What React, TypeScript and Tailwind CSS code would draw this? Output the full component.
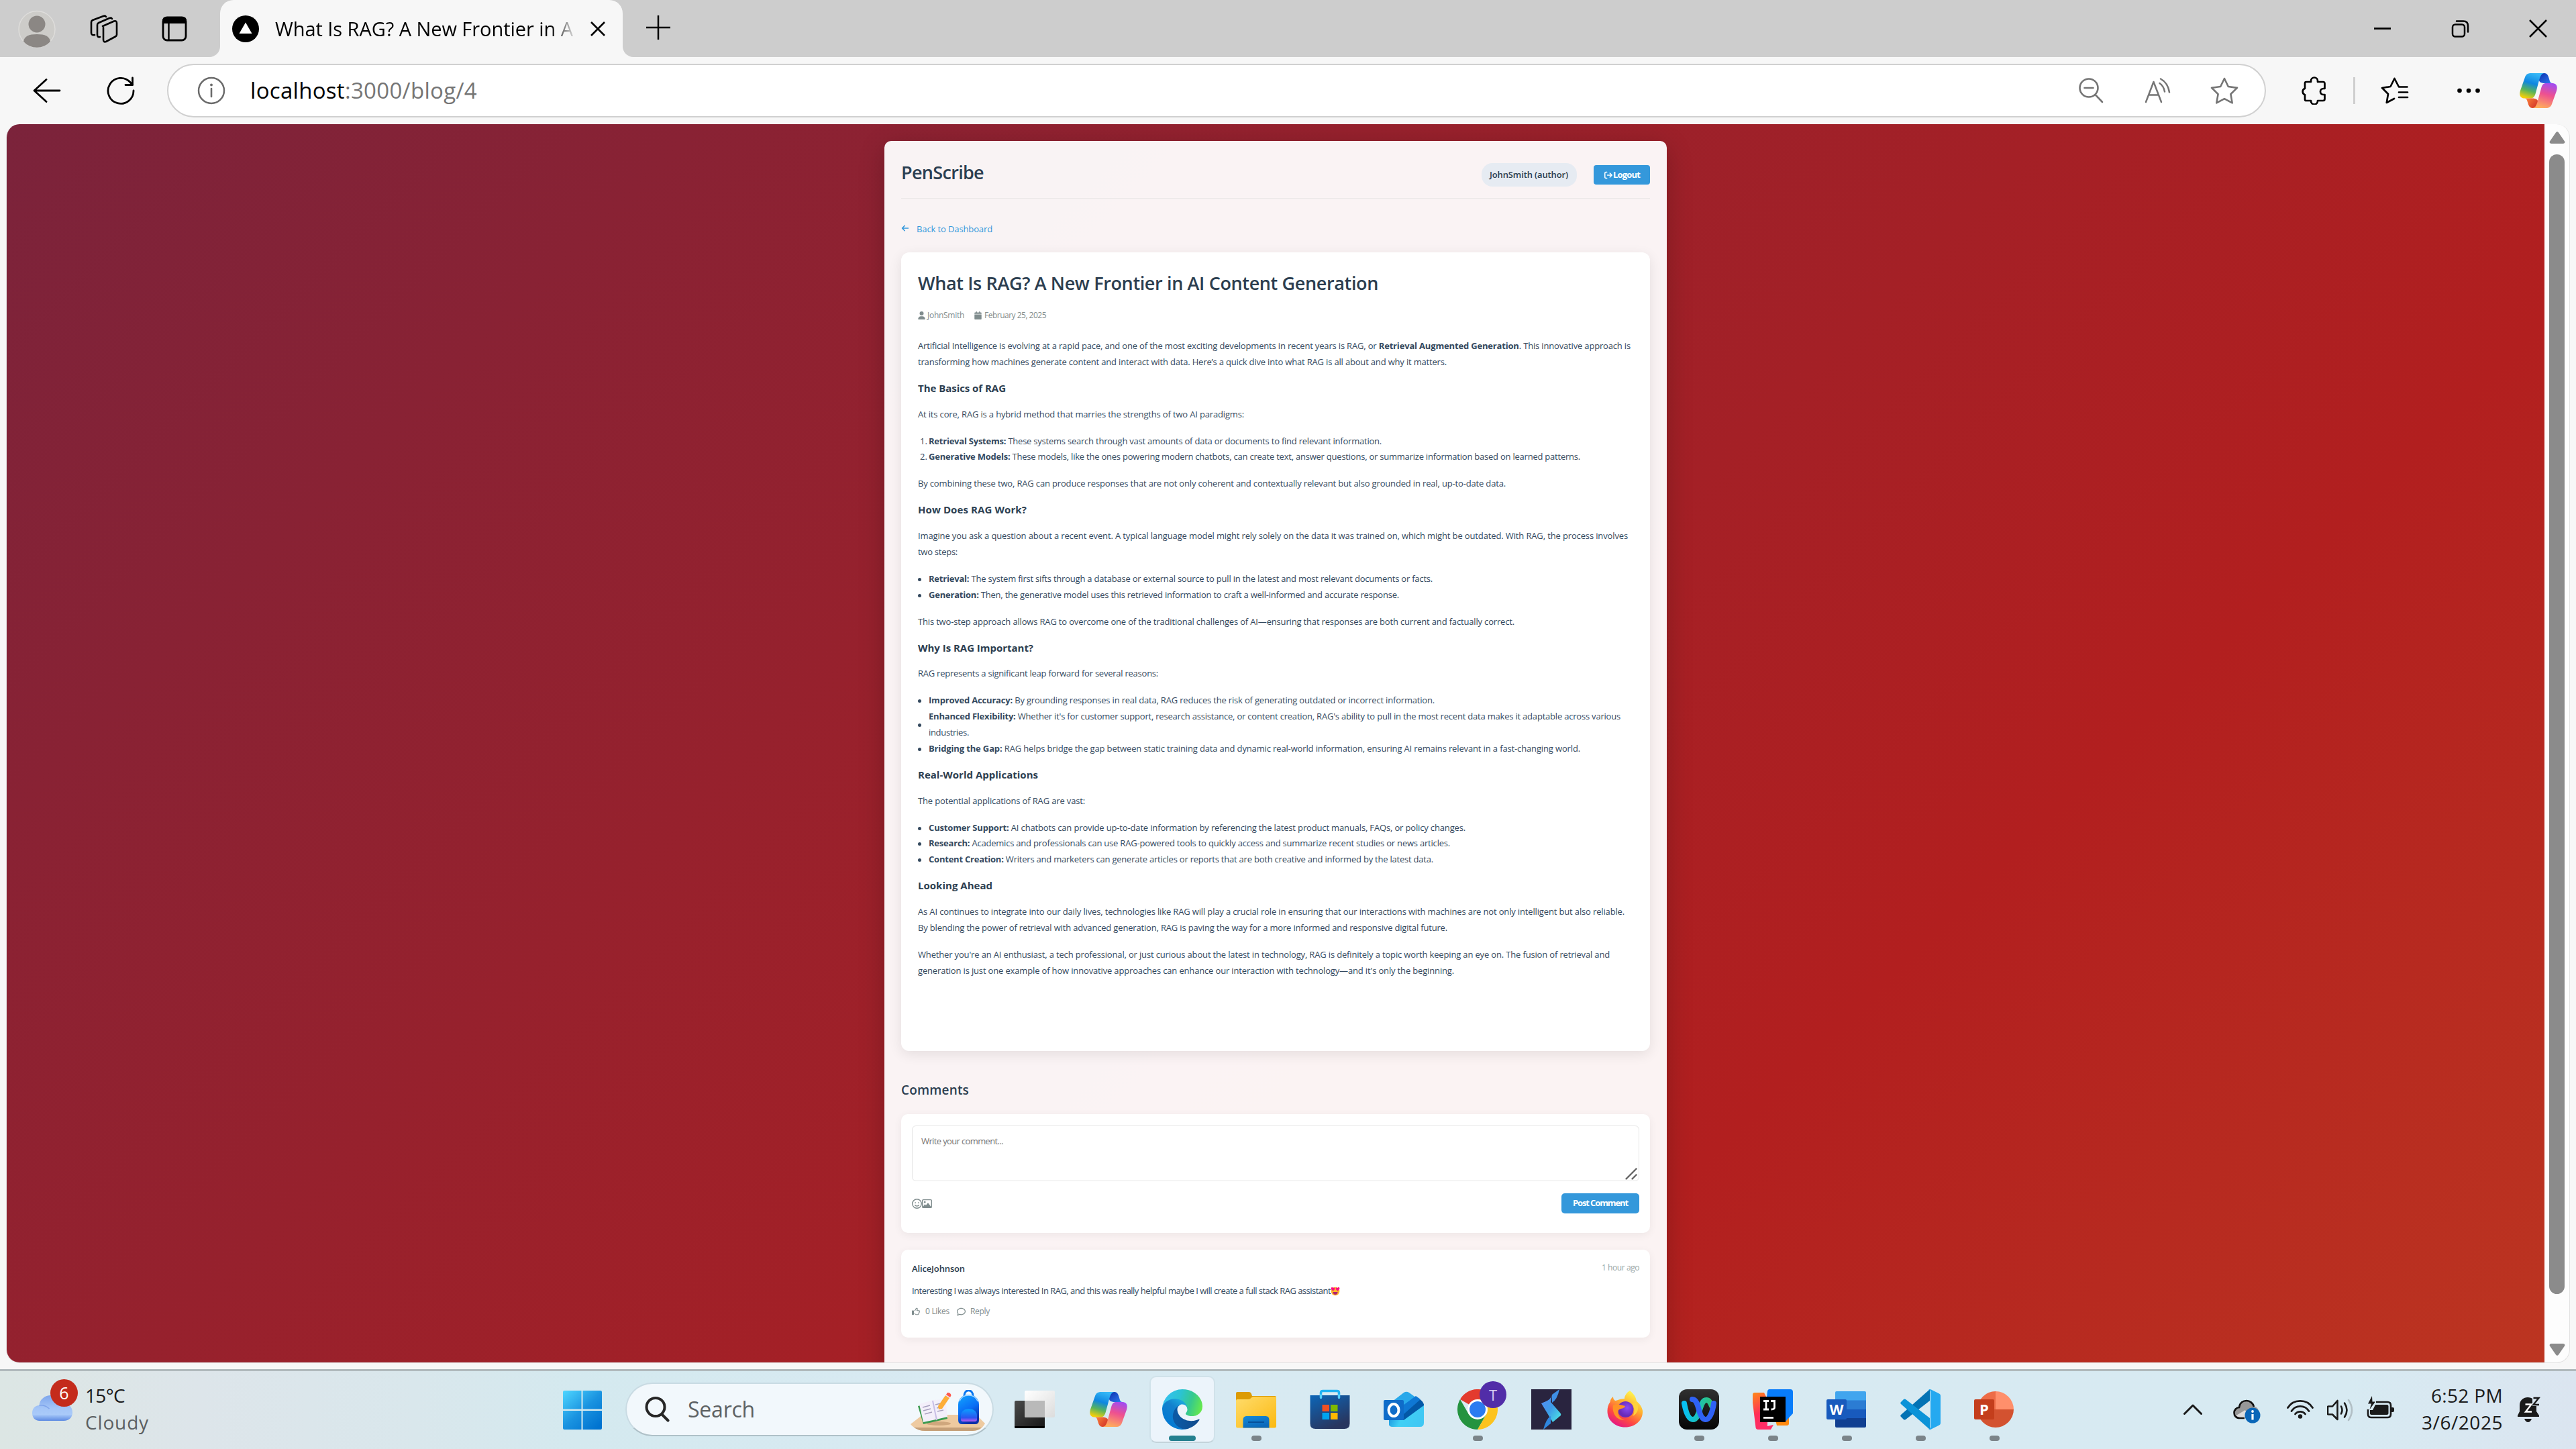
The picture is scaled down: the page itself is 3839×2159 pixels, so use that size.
import { useLayoutEffect, useRef, type ReactNode } from "react";
import {
  FaArrowLeft,
  FaUser,
  FaCalendar,
  FaRegFaceSmile,
  FaRegImage,
  FaRegThumbsUp,
  FaRegComment,
  FaArrowRightFromBracket,
} from "react-icons/fa6";

/** Single line of text whose tracking is adjusted so that it spans `w` pixels. */
function Fit({ w, className = "", children }: { w: number; className?: string; children: ReactNode }) {
  const ref = useRef<HTMLSpanElement>(null);
  useLayoutEffect(() => {
    const el = ref.current;
    if (!el) return;
    el.style.letterSpacing = "0px";
    const natural = el.getBoundingClientRect().width;
    const count = Math.max(1, (el.textContent ?? "").length);
    el.style.letterSpacing = `${(w - natural) / count}px`;
  }, [w]);
  return (
    <span ref={ref} className={`inline-block whitespace-nowrap ${className}`}>
      {children}
    </span>
  );
}

/* ---------- Browser chrome icons ---------- */

function CopilotIcon({ id, className }: { id: string; className: string }) {
  return (
    <svg viewBox="0 0 56 52" className={className} preserveAspectRatio="none">
      <defs>
        <linearGradient id={`${id}a`} x1="0.6" y1="0" x2="0.3" y2="1">
          <stop offset="0" stopColor="#35b8f7" />
          <stop offset="0.4" stopColor="#0f86e0" />
          <stop offset="0.7" stopColor="#57b35c" />
          <stop offset="1" stopColor="#f6cf08" />
        </linearGradient>
        <linearGradient id={`${id}b`} x1="0" y1="0" x2="1" y2="1">
          <stop offset="0" stopColor="#0c2fae" />
          <stop offset="1" stopColor="#2f7cf2" />
        </linearGradient>
        <linearGradient id={`${id}c`} x1="0.7" y1="0" x2="0.4" y2="1">
          <stop offset="0" stopColor="#a24cf0" />
          <stop offset="0.45" stopColor="#ee5090" />
          <stop offset="1" stopColor="#ffac5c" />
        </linearGradient>
        <linearGradient id={`${id}d`} x1="0" y1="0" x2="1" y2="0.6">
          <stop offset="0" stopColor="#ff8a3c" />
          <stop offset="1" stopColor="#d63a2a" />
        </linearGradient>
      </defs>
      <path d="M31 0h6c3.500 0 5.500 3 6.500 7l1.500 5q1 3 4 3h-11c-7 0-10-2-9-8z" fill={`url(#${id}b)`} />
      <path d="M17 0h20c-4 0-6 4-7.500 9l-6 22c-1.500 4.500-3.500 6.500-7.500 6.500H8c-7 0-9-4.500-7-11.500L8 6c1.500-4 4-6 9-6z" fill={`url(#${id}a)`} />
      <path d="M24 52h-5c-3.500 0-5.500-3-6.500-7l-1.500-4.500q-1-3-4-3h11c7 0 10 2 9 7z" fill={`url(#${id}d)`} />
      <path d="M39 52H19c4 0 6-4 7.500-9l6-22c1.500-4.500 3.500-6 7.500-6h8c7 0 9 4.500 7 11.500L48 46c-1.500 4-4 6-9 6z" fill={`url(#${id}c)`} />
    </svg>
  );
}

function ProfileIcon() {
  return (
    <svg viewBox="0 0 56 57" className="h-[57px] w-[56px]">
      <circle cx="28" cy="28.500" r="27" fill="#cdccc9" stroke="#dedddb" strokeWidth="1.500" />
      <ellipse cx="28" cy="21" rx="12.500" ry="12.500" fill="#8b8784" />
      <path d="M8 47c1-8 8-11 20-11s19 3 20 11a27 27 0 0 1-40 0z" fill="#8b8784" />
    </svg>
  );
}

function WorkspacesIcon() {
  return (
    <svg viewBox="0 0 42 42" className="h-[42px] w-[42px]" fill="none" stroke="#000" strokeWidth="2.600" strokeLinejoin="round" strokeLinecap="round">
      <path d="M19 17 36 9.500q4-1 4 3v17q0 2-2 3L24 40q-4 1.500-4-3V19" />
      <path d="M15 33q-4 1-4-3V15q0-2 2-3L29 5q3-1 4 1" />
      <path d="M7 30q-5 1-5-3V11q0-2 2-3L20 2q3-1 4 1" />
    </svg>
  );
}

function TabActionsIcon() {
  return (
    <svg viewBox="0 0 38 38" className="h-[38px] w-[38px]" fill="none" stroke="#000">
      <rect x="2" y="2" width="34" height="34" rx="6" strokeWidth="2.800" />
      <path d="M1 11V7q0-6 6-6h24q6 0 6 6v4z" fill="#000" stroke="none" />
      <path d="M10.500 10v26" strokeWidth="2.400" />
    </svg>
  );
}

function Favicon() {
  return (
    <svg viewBox="0 0 40 40" className="h-[40px] w-[40px]">
      <circle cx="20" cy="20" r="20" fill="#000" />
      <path d="M20 10.500 29.500 27h-19z" fill="#fff" />
    </svg>
  );
}

/* ---------- Taskbar icons ---------- */

function StartIcon() {
  return (
    <svg viewBox="0 0 58 58" className="h-[58px] w-[58px]">
      <defs>
        <linearGradient id="start" gradientUnits="userSpaceOnUse" x1="0" y1="0" x2="50" y2="56">
          <stop offset="0" stopColor="#4fd6ff" />
          <stop offset="0.550" stopColor="#1a93e0" />
          <stop offset="1" stopColor="#0073d0" />
        </linearGradient>
      </defs>
      <path d="M2 0h25.500v27.500H0V2a2 2 0 0 1 2-2zM29.500 0H56a2 2 0 0 1 2 2v25.500H29.500zM0 30h27.500v28H2a2 2 0 0 1-2-2zM29.500 30H58v26a2 2 0 0 1-2 2H29.500z" fill="url(#start)" />
    </svg>
  );
}

function SearchArt() {
  return (
    <svg viewBox="0 0 112 62" className="h-[62px] w-[112px]">
      <defs>
        <linearGradient id="bag" x1="0" y1="0" x2="0.400" y2="1">
          <stop offset="0" stopColor="#12a8ff" />
          <stop offset="0.600" stopColor="#0a6cf5" />
          <stop offset="1" stopColor="#0b2fa8" />
        </linearGradient>
        <linearGradient id="pocket" x1="0" y1="0" x2="0" y2="1">
          <stop offset="0" stopColor="#0aa0ff" />
          <stop offset="0.700" stopColor="#2b55f0" />
          <stop offset="1" stopColor="#c05cf2" />
        </linearGradient>
      </defs>
      <path d="M18 37h80l13 13c-5 9-11 11-21 11H22C12 61 5 57 0 51z" fill="#eecaa0" />
      <path d="M5 56h101c-5 4-9 5-16 5H22c-7 0-12-2-17-5z" fill="#c49f78" />
      <ellipse cx="42" cy="50" rx="18" ry="3" fill="#cfa77d" />
      <path d="m11 24 8 27 36-8-7-28z" fill="#3a9a4e" />
      <path d="m13 21 20-6 19-1 3 26-17 4-19 4z" fill="#f3effa" />
      <path d="m33 16 6 29" stroke="#c9bfe6" strokeWidth="2" />
      <path d="m18 26 11-3m-10 8 11-3m-9 8 11-3m5-11 8-2m-6 7 9-2m-8 7 9-2" stroke="#a7a0bf" strokeWidth="1.300" />
      <path d="m41 24 11-16 6 4-11 16-5 1z" fill="#fdae38" />
      <path d="m52 8 2.500-3.500 6 4L58 12z" fill="#e9dff5" />
      <path d="M54 5.500c1-3 6-1 6.500 2.500L59 11l-6-4z" fill="#ff5a4d" />
      <path d="M80 9c0-11 13-11 13 0" fill="none" stroke="#0a78f0" strokeWidth="3" />
      <path d="M71 22c0-20 31-20 31 0v23q0 6-6 6H77q-6 0-6-6z" fill="url(#bag)" />
      <path d="M73 17c4-12 23-12 27 0" fill="none" stroke="#a9d8ff" strokeWidth="1.500" />
      <path d="M75 38c0-13 24-13 24 0v6q0 3-3 3H78q-3 0-3-3z" fill="url(#pocket)" />
    </svg>
  );
}

function TaskViewIcon() {
  return (
    <svg viewBox="0 0 60 60" className="h-[60px] w-[60px]">
      <defs>
        <linearGradient id="tvd" x1="0" y1="0" x2="1" y2="1">
          <stop offset="0" stopColor="#4a4a4a" />
          <stop offset="1" stopColor="#161616" />
        </linearGradient>
        <linearGradient id="tvl" x1="0" y1="0" x2="1" y2="1">
          <stop offset="0" stopColor="#fff" />
          <stop offset="1" stopColor="#dcdcdc" />
        </linearGradient>
      </defs>
      <rect x="0" y="17" width="45" height="41" rx="2" fill="url(#tvd)" />
      <path d="M0 55h45v1.500q0 1.500-2 1.500H2q-2 0-2-1.500z" fill="#000" />
      <rect x="15" y="2" width="45" height="40" rx="2" fill="url(#tvl)" />
      <path d="M15 17h30v25H17q-2 0-2-2z" fill="#b9b9b9" />
    </svg>
  );
}

function EdgeIcon() {
  return (
    <svg viewBox="0 0 256 256" className="h-[60px] w-[60px]">
      <defs>
        <linearGradient id="e1" x1="0.200" y1="0.500" x2="1" y2="0.500">
          <stop offset="0" stopColor="#0c59a4" />
          <stop offset="1" stopColor="#114a8b" />
        </linearGradient>
        <linearGradient id="e2" x1="0.800" y1="0.200" x2="0.300" y2="1">
          <stop offset="0" stopColor="#1ba4dc" />
          <stop offset="0.300" stopColor="#1481cd" />
          <stop offset="1" stopColor="#0078d4" />
        </linearGradient>
        <linearGradient id="e3" x1="0" y1="0.400" x2="1" y2="0.600">
          <stop offset="0" stopColor="#35c1f1" />
          <stop offset="0.400" stopColor="#2bc3d2" />
          <stop offset="0.700" stopColor="#36c98e" />
          <stop offset="1" stopColor="#66e94c" />
        </linearGradient>
      </defs>
      <path transform="translate(-4.630 -4.920)" d="M235.680 195.460a93.730 93.730 0 0 1-10.540 4.710 101.870 101.870 0 0 1-35.900 6.460c-47.320 0-88.540-32.550-88.540-74.320A31.480 31.480 0 0 1 117.130 105c-42.800 1.800-53.800 46.400-53.800 72.530 0 73.880 68.090 81.370 82.760 81.370 7.910 0 19.840-2.300 27-4.560l1.310-.440a128.340 128.340 0 0 0 66.600-52.800 4 4 0 0 0-5.320-5.640Z" fill="url(#e1)" />
      <path d="M105.730 241.420a79.200 79.200 0 0 1-22.740-21.340 80.720 80.720 0 0 1 29.530-120c3.120-1.470 8.450-4.130 15.540-4a32.350 32.350 0 0 1 25.690 13 31.880 31.880 0 0 1 6.360 18.660c0-.210 24.460-79.600-80-79.600-43.900 0-80 41.660-80 78.210a130.150 130.150 0 0 0 12.110 56 128 128 0 0 0 156.380 67.110 75.550 75.550 0 0 1-62.780-8Z" fill="url(#e2)" />
      <path d="M152.330 148.860c-.810 1.050-3.300 2.500-3.300 5.660 0 2.610 1.700 5.120 4.720 7.230 14.380 10 41.490 8.680 41.560 8.680a59.560 59.560 0 0 0 30.270-8.350 61.380 61.380 0 0 0 30.430-52.880c.260-22.410-8-37.310-11.340-43.910C223.500 23.840 177.720.480 128 .480A128 128 0 0 0 0 126.680c.480-36.540 36.800-66.050 80-66.050 3.500 0 23.460.340 42 10.070 16.340 8.580 24.900 18.940 30.850 29.210 6.180 10.670 7.280 24.150 7.280 29.520s-2.740 13.330-7.800 19.430Z" fill="url(#e3)" />
    </svg>
  );
}

function ExplorerIcon() {
  return (
    <svg viewBox="0 0 60 60" className="h-[60px] w-[60px]">
      <defs>
        <linearGradient id="fold" x1="0" y1="0" x2="1" y2="1">
          <stop offset="0" stopColor="#ffdc6c" />
          <stop offset="1" stopColor="#fbb910" />
        </linearGradient>
        <linearGradient id="fold2" x1="0" y1="0" x2="0.500" y2="1">
          <stop offset="0" stopColor="#148ad8" />
          <stop offset="1" stopColor="#0b68ba" />
        </linearGradient>
      </defs>
      <path d="M2 4h17q3 0 4 3l1 3h34q2 0 2 2v6H0V6q0-2 2-2z" fill="#dc9b05" />
      <path d="M0 17q0-2 2-2h16q3 0 5-2.500 1-1.500 3-1.500h34v44q0 2.500-2.500 2.500h-55Q0 57.500 0 55z" fill="url(#fold)" />
      <path d="M10.500 57.500V46q0-6 5-6h29q5 0 5 6v11.500z" fill="url(#fold2)" />
      <rect x="18" y="48" width="24" height="2" fill="#06509a" />
    </svg>
  );
}

function StoreIcon() {
  return (
    <svg viewBox="0 0 60 60" className="h-[60px] w-[60px]">
      <defs>
        <linearGradient id="store" x1="0" y1="0" x2="0.500" y2="1">
          <stop offset="0" stopColor="#0d66b8" />
          <stop offset="1" stopColor="#28365f" />
        </linearGradient>
      </defs>
      <path d="M16.500 12.500V5q0-2.500 3-2.500h21q3 0 3 2.500v7.500" fill="none" stroke="#22b3f3" strokeWidth="3.500" />
      <path d="M0.500 9h59v42q0 8-8 8h-43q-8 0-8-8z" fill="url(#store)" />
      <path d="M16.500 9v3.500m27-3.500v3.500" stroke="#55d0ff" strokeWidth="3.500" strokeLinecap="round" />
      <rect x="18.500" y="23" width="10.500" height="10" fill="#f25022" />
      <rect x="31" y="23" width="10.500" height="10" fill="#7fba00" />
      <rect x="18.500" y="35" width="10.500" height="10" fill="#00a4ef" />
      <rect x="31" y="35" width="10.500" height="10" fill="#ffb900" />
    </svg>
  );
}

function OutlookIcon() {
  return (
    <svg viewBox="0 0 60 60" className="h-[60px] w-[60px] font-['Open_Sans',sans-serif]">
      <defs>
        <linearGradient id="ol" x1="0" y1="0" x2="1" y2="0.300">
          <stop offset="0" stopColor="#0e7fd6" />
          <stop offset="0.500" stopColor="#3fd0f5" />
          <stop offset="1" stopColor="#3fc8f4" />
        </linearGradient>
      </defs>
      <path d="m8 22 22-17q4-2.500 8 0l18 13q4 3 4 8v7L30 54H8z" fill="#28a8ea" />
      <path d="M54 15q6 4 6 9v5L32 48 20 41z" fill="#0358a7" />
      <path d="m48 10 7 5-25 22-8-8z" fill="#0f78d4" />
      <path d="M60 24v26q0 6-6 6H13q-5 0-5-5V40l22 6z" fill="url(#ol)" />
      <rect x="0" y="16" width="30" height="30" rx="2" fill="#0f6cc9" />
      <ellipse cx="15" cy="31" rx="7.500" ry="9" fill="none" stroke="#fff" strokeWidth="4" />
    </svg>
  );
}

function ChromeIcon() {
  return (
    <svg viewBox="0 0 60 60" className="h-[60px] w-[60px]">
      <path d="M30 30 4 15A30 30 0 0 1 56 15z" fill="#e33b2e" />
      <path d="M4 15a30 30 0 0 0 26 45l13-22.500-13-7.500L17 37.500z" fill="#24933f" />
      <path d="M30 15h26a30 30 0 0 1-26 45l13-22.500z" fill="#fcc31e" />
      <circle cx="30" cy="30" r="15" fill="#fff" />
      <circle cx="30" cy="30" r="12" fill="#2c7bf0" />
    </svg>
  );
}

function SapphireIcon() {
  return (
    <svg viewBox="0 0 60 60" className="h-[60px] w-[60px]">
      <defs>
        <linearGradient id="sap" x1="0" y1="0" x2="1" y2="1">
          <stop offset="0" stopColor="#5a8cf5" />
          <stop offset="0.500" stopColor="#3d9be8" />
          <stop offset="1" stopColor="#4ff0e4" />
        </linearGradient>
      </defs>
      <rect width="60" height="60" fill="#29243f" />
      <path d="M42 0 31 8v12q8-5 11-20z" fill="#3f8fe6" />
      <path d="M31 8c-2 7-6 9-16 13l17 28 12-10q1-2-1-4L29 19z" fill="url(#sap)" />
      <path d="M18 60 29 51V40q-7 4-11 20z" fill="#2f86e0" />
    </svg>
  );
}

function FirefoxIcon() {
  return (
    <svg viewBox="0 0 60 60" className="h-[60px] w-[60px]">
      <defs>
        <linearGradient id="ff" x1="0.800" y1="0.100" x2="0.300" y2="1">
          <stop offset="0" stopColor="#fff44f" />
          <stop offset="0.350" stopColor="#ffb02e" />
          <stop offset="0.700" stopColor="#ff4b41" />
          <stop offset="1" stopColor="#e31587" />
        </linearGradient>
        <radialGradient id="ffp" cx="0.600" cy="0.400">
          <stop offset="0" stopColor="#8a4bf5" />
          <stop offset="1" stopColor="#6a2bb8" />
        </radialGradient>
      </defs>
      <path d="M37 2c8 7 9 11 10 16 2 1 8 7 9 14 1 14-11 24.500-26 24.500S3 46 3.500 32c.200-5 1-9 4-13 .500-4 2-6 4.500-8 0 3 1 4 3 6 4 0 6-3 14-3 0-4 3-9 8-12z" fill="url(#ff)" />
      <circle cx="30.500" cy="30" r="12" fill="url(#ffp)" />
      <path d="M12 24c6-3 10-1 18 1-1 4-6 3-10 6-2 8 3 14 10 14-12 3-20-9-18-21z" fill="#ff9325" />
      <path d="M40 21c4 5 5 14 1 19 9-4 10-14 6-20z" fill="#ffd23c" />
    </svg>
  );
}

function WebexIcon() {
  return (
    <svg viewBox="0 0 60 60" className="h-[60px] w-[60px]" fill="none" strokeLinecap="round" strokeLinejoin="round">
      <defs>
        <linearGradient id="wx" x1="0" y1="0" x2="0" y2="1">
          <stop offset="0" stopColor="#303030" />
          <stop offset="1" stopColor="#050505" />
        </linearGradient>
        <linearGradient id="wx1" x1="0" y1="0" x2="1" y2="0">
          <stop offset="0" stopColor="#07c1f5" />
          <stop offset="1" stopColor="#2fc27a" />
        </linearGradient>
      </defs>
      <rect width="60" height="60" rx="12" fill="url(#wx)" />
      <path d="M8 21c3 16 7 24 13 24s8-8 11-17 5-12 9-12 6 4 8 9" stroke="url(#wx1)" strokeWidth="8" />
      <path d="M20 15c6 0 8 8 10 16s5 14 10 14 10-9 12-24" stroke="#2f62f5" strokeWidth="8" />
    </svg>
  );
}

function IntelliJIcon() {
  return (
    <svg viewBox="0 0 60 60" className="h-[60px] w-[60px] font-['Noto_Sans',sans-serif]">
      <defs>
        <linearGradient id="ij" x1="0" y1="0" x2="0.300" y2="1">
          <stop offset="0" stopColor="#ff8a18" />
          <stop offset="0.600" stopColor="#ff2d58" />
          <stop offset="1" stopColor="#ff2d68" />
        </linearGradient>
      </defs>
      <path d="M30 30h24v21q0 3-3 3H36z" fill="#ff8a10" />
      <path d="M3 5h14l5 10v40l9-2-4 7H8q-3 0-3.500-3L0 20V8q0-3 3-3z" fill="url(#ij)" />
      <path d="M25 0h31q4 0 4 4v32L48 49 20 20l2-17q.500-3 3-3z" fill="#087cfa" />
      <rect x="11" y="11" width="38" height="38" fill="#000" />
      <path d="M16 17.500h8M20 17.500V30M16 30h8M27 17.500h5.500V27q0 3-5 3" fill="none" stroke="#fff" strokeWidth="2.800" />
      <rect x="16" y="41" width="15" height="2.800" fill="#fff" />
    </svg>
  );
}

function WordIcon() {
  return (
    <svg viewBox="0 0 60 60" className="h-[60px] w-[60px] font-['Open_Sans',sans-serif]">
      <path d="M13 17V5q0-2 2-2h42q2 0 2 2v12z" fill="#41a5ee" />
      <path d="M13 16.500h46V30H13z" fill="#2b7cd3" />
      <path d="M13 30h46v13H13z" fill="#185abd" />
      <path d="M13 43h46v12q0 2-2 2H15q-2 0-2-2z" fill="#103f91" />
      <rect x="0" y="15" width="30" height="30" rx="2" fill="#185abd" />
      <text x="15" y="38" textAnchor="middle" fontSize="22" fontWeight="700" fill="#fff" textLength="21" lengthAdjust="spacingAndGlyphs">W</text>
    </svg>
  );
}

function CodeIcon() {
  return (
    <svg viewBox="0 0 60 60" className="h-[60px] w-[60px]">
      <path d="M44 0v17L8 45q-2 1-3 0l-4-4q-1.500-1.500 0-3z" fill="#0272b4" />
      <path d="M1 22q-1.500-1.500 0-3l4-4q1.500-1 3 0l36 28v17z" fill="#0b93d8" />
      <path d="M42 0.500q2-1 4 0l12 6q2 1 2 3v41q0 2-2 3l-12 6q-2 1-4 0 3-1 3-4V4q0-3-3-3.500z" fill="#25a9f0" />
    </svg>
  );
}

function PowerPointIcon() {
  return (
    <svg viewBox="0 0 60 60" className="h-[60px] w-[60px] font-['Open_Sans',sans-serif]">
      <path d="M32 3a27 27 0 0 0-27 27h27z" fill="#ed6c47" />
      <path d="M32 3a27 27 0 0 1 27 27H32z" fill="#ff8f6b" />
      <path d="M5 30a27 27 0 0 0 54 0z" fill="#d35230" />
      <rect x="0" y="15" width="30" height="30" rx="2" fill="#c43e1c" />
      <text x="15" y="38" textAnchor="middle" fontSize="22" fontWeight="700" fill="#fff">P</text>
    </svg>
  );
}

function WeatherIcon() {
  return (
    <svg viewBox="0 0 60 38" className="h-[38px] w-[60px]">
      <defs>
        <linearGradient id="wc" x1="0" y1="0" x2="0" y2="1">
          <stop offset="0" stopColor="#7ea6ec" />
          <stop offset="0.500" stopColor="#a4c5f7" />
          <stop offset="0.750" stopColor="#a9caf9" />
          <stop offset="1" stopColor="#5d8ae2" />
        </linearGradient>
      </defs>
      <path d="M11 38C4 38 0 33 0 26.500 0 20 4 15 10.500 15 11 6 19 0 28 0c9 0 14 5 16.500 12C54 12 60 17 60 25.500 60 33 55 38 47 38z" fill="url(#wc)" />
      <path d="M10.500 15q8-1 15 5" fill="none" stroke="#7ea3ea" strokeWidth="1.500" />
    </svg>
  );
}

/* ---------- Page content ---------- */

function Heading({ w, children }: { w: number; children: ReactNode }) {
  return (
    <h2 className="mt-[13.4px] mb-[17.8px] text-[15px] leading-5 font-bold text-[#2c3e50]">
      <Fit w={w}>{children}</Fit>
    </h2>
  );
}

function Para({ children }: { children: ReactNode }) {
  return <p className="mb-[16.2px] flex flex-col items-start">{children}</p>;
}

function Item({ marker, children }: { marker?: string; children: ReactNode }) {
  return (
    <li className="flex">
      <span className="flex w-4 shrink-0 items-center">
        {marker ? <span className="pl-[3px]">{marker}</span> : <span className="mt-px size-[5px] rounded-full bg-[#34495e]" />}
      </span>
      <span className="flex flex-col items-start">{children}</span>
    </li>
  );
}

function TaskCell({ children, running, active }: { children: ReactNode; running?: boolean; active?: boolean }) {
  return (
    <div className="flex w-[110px] justify-center pt-[7px]">
      <div
        className={
          active
            ? "flex h-[100px] w-[98px] flex-col items-center rounded-[10px] border-2 border-[#d0e2ea] border-b-[#c3d3da] bg-[#ecf4fb] pt-[18px]"
            : "flex h-[100px] w-[98px] flex-col items-center pt-5"
        }
      >
        {children}
        {active && <span className="mt-[9px] h-2 w-10 rounded-full bg-[#24808f]" />}
        {running && <span className="mt-[9px] h-2 w-[15px] rounded-full bg-[#7b8489]" />}
      </div>
    </div>
  );
}

export default function App() {
  return (
    <div className="flex h-[2159px] w-[3839px] flex-col overflow-hidden bg-[#f7f7f7] font-['Open_Sans','Noto_Sans',sans-serif] text-black">
      {/* Tab strip */}
      <div className="flex h-[85px] shrink-0 items-start bg-[#cdcdcd]">
        <div className="mt-[15px] ml-[27px]"><ProfileIcon /></div>
        <div className="mt-[22px] ml-[51px]"><WorkspacesIcon /></div>
        <div className="mt-6 ml-[65px]"><TabActionsIcon /></div>
        <div className="ml-[33px] flex">
          <div className="flex h-[85px] w-4 items-end bg-[#f7f7f7]">
            <div className="h-[85px] w-4 rounded-br-2xl bg-[#cdcdcd]" />
          </div>
          <div className="bg-[#cdcdcd]">
            <div className="flex h-[85px] w-[600px] items-center rounded-t-[20px] bg-[#f7f7f7] pl-[18px]">
              <Favicon />
              <div className="ml-6 w-[446px] overflow-hidden text-[29px] leading-10 [mask-image:linear-gradient(to_right,black_410px,transparent_450px)]">
                <Fit w={444}>What Is RAG? A New Frontier in A</Fit>
              </div>
              <svg viewBox="0 0 22 22" className="ml-[24px] h-[22px] w-[22px]" stroke="#000" strokeWidth="2.600"><path d="m1 1 20 20M21 1 1 21" /></svg>
            </div>
          </div>
          <div className="h-[85px] w-4 bg-[#f7f7f7]">
            <div className="h-[85px] w-4 rounded-bl-2xl bg-[#cdcdcd]" />
          </div>
        </div>
        <svg viewBox="0 0 36 36" className="mt-[23px] ml-[19px] h-9 w-9" stroke="#000" strokeWidth="2.500"><path d="M18 0v36M0 18h36" /></svg>
        <div className="mt-[29px] mr-[43px] ml-auto flex items-center gap-[89px]">
          <svg viewBox="0 0 27 27" className="h-[27px] w-[27px]"><path d="M1 13.500h25" stroke="#000" strokeWidth="2.800" /></svg>
          <svg viewBox="0 0 27 27" className="h-[27px] w-[27px]" fill="none" stroke="#000" strokeWidth="2.500">
            <rect x="2" y="7.500" width="18" height="18" rx="4" />
            <path d="M8 2.500h10q7 0 7 7v9" strokeLinecap="round" />
          </svg>
          <svg viewBox="0 0 27 27" className="h-[27px] w-[27px]" stroke="#000" strokeWidth="2.500"><path d="m1 1 25 25M26 1 1 26" /></svg>
        </div>
      </div>

      {/* Toolbar */}
      <div className="flex h-[100px] shrink-0 items-center">
        <svg viewBox="0 0 42 36" className="ml-[49px] h-9 w-[42px]" fill="none" stroke="#000" strokeWidth="2.800" strokeLinecap="round" strokeLinejoin="round"><path d="M20 1.500 2 18l18 16.500M2 18h38" /></svg>
        <svg viewBox="0 0 42 42" className="ml-[68px] h-[42px] w-[42px]" fill="none" stroke="#000" strokeWidth="2.800" strokeLinecap="round" strokeLinejoin="round">
          <path d="M40 21A19 19 0 1 1 35 8.500l3.500 4" />
          <path d="M38.500 2v10.500H28" />
        </svg>
        <div className="ml-12 flex h-20 w-[3128px] items-center rounded-full border-2 border-[#d0d0d0] bg-white pl-[43px]">
          <svg viewBox="0 0 42 42" className="h-[42px] w-[42px]" fill="none" stroke="#6b6b6b">
            <circle cx="21" cy="21" r="19" strokeWidth="2.500" />
            <path d="M21 18v12" strokeWidth="2.600" strokeLinecap="round" />
            <circle cx="21" cy="12.500" r="1.900" fill="#6b6b6b" stroke="none" />
          </svg>
          <div className="ml-[37px] text-[33px] leading-[44px] text-[#757575]">
            <Fit w={338}><span className="text-black">localhost</span>:3000/blog/4</Fit>
          </div>
          <svg viewBox="0 0 38 38" className="mr-[61px] ml-auto h-[38px] w-[38px]" fill="none" stroke="#757575" strokeWidth="2.600" strokeLinecap="round">
            <circle cx="16" cy="15" r="13.500" />
            <path d="M9.500 15h13M25.500 25l10.500 11" />
          </svg>
          <svg viewBox="0 0 40 38" className="mr-[58px] h-[38px] w-10" fill="none" stroke="#757575" strokeWidth="2.500" strokeLinecap="round" strokeLinejoin="round">
            <path d="m2 36 11.500-30L25 36M6 25.500h15" />
            <path d="M22.500 8q6 4 7.500 12.500M24 1.500q11 6 13 20" />
          </svg>
          <svg viewBox="0 0 42 40" className="mr-[39px] h-10 w-[42px]" fill="none" stroke="#757575" strokeWidth="2.600" strokeLinejoin="round">
            <path d="m21 2 5.800 12 13.200 1.900-9.600 9.300 2.300 13.200L21 32.200 9.300 38.400l2.300-13.200L2 15.900 15.200 14z" />
          </svg>
        </div>
        <svg viewBox="0 0 38 42" className="ml-[52px] h-[42px] w-[38px]" fill="none" stroke="#000" strokeWidth="2.700" strokeLinejoin="round">
          <path d="M8 8h7V6.500a5 5 0 0 1 10 0V8h8q2.500 0 2.500 2.500V18h-2a4.500 4.500 0 0 0 0 9h2v6.500q0 2.500-2.500 2.500h-8v.500a5 5 0 0 1-10 0V36H8q-2 0-2-2v-7H5.500a5 5 0 0 1 0-9H6v-8q0-2 2-2z" />
        </svg>
        <div className="ml-10 h-10 w-[3px] bg-[#cfcfcf]" />
        <svg viewBox="0 0 42 40" className="ml-[38px] h-10 w-[42px]" fill="none" stroke="#000" strokeWidth="2.700" strokeLinejoin="round" strokeLinecap="round">
          <path d="M39.500 14.500H27L20.500 2 14.500 14 2 16l9 9-2.200 13L20 32" />
          <path d="M27 22.500h13M27 30h13" />
        </svg>
        <svg viewBox="0 0 34 8" className="ml-[72px] h-2 w-[34px]"><circle cx="3.500" cy="4" r="3.300" /><circle cx="17" cy="4" r="3.300" /><circle cx="30.500" cy="4" r="3.300" /></svg>
        <div className="ml-[59px]"><CopilotIcon id="cpa" className="h-[52px] w-14" /></div>
      </div>

      {/* Viewport */}
      <div className="mx-[9px] flex h-[1846px] shrink-0 overflow-hidden rounded-[20px] border-x border-b border-[#e3e3e3] bg-[#fdfdfd]">
        <div className="flex h-[1845px] w-[3782px] items-start justify-center overflow-hidden bg-[linear-gradient(135deg,#7b233b_0%,#b21f1f_72.4%,#bc3521_100%)] pt-[25px]">
          <div className="flex h-[1900px] w-[1166px] shrink-0 flex-col rounded-[10px] bg-white/95 p-[25px] shadow-[0_10px_38px_rgba(0,0,0,0.22)]">
            <div className="flex h-[61px] shrink-0 items-start border-b border-[#ebe7e7] text-[#2c3e50]">
              <h1 className="mt-[2px] text-[27px] leading-10 font-semibold"><Fit w={123}>PenScribe</Fit></h1>
              <div className="mt-2 ml-auto flex h-[35px] w-[142px] items-center rounded-[16px] bg-[#e6ebf2] pl-3 text-[13px] font-semibold">
                <Fit w={117}>JohnSmith (author)</Fit>
              </div>
              <div className="mt-[11px] ml-[25px] flex h-[29px] w-[84px] items-center rounded bg-[#3498db] pl-4 text-[13px] font-bold text-white">
                <FaArrowRightFromBracket className="size-3" />
                <Fit w={40} className="ml-px">Logout</Fit>
              </div>
            </div>

            <div className="mt-[35px] flex h-5 shrink-0 items-center text-[13px] leading-5 font-medium text-[#3498db]">
              <FaArrowLeft className="-mt-0.5 size-3" />
              <Fit w={113} className="ml-[11px]">Back to Dashboard</Fit>
            </div>

            <article className="mt-[25px] h-[1190px] shrink-0 rounded-[12px] bg-white px-[25px] pt-[26px] text-[13px] leading-[23.8px] text-[#34495e] shadow-[0_5px_19px_rgba(0,0,0,0.09)]">
              <h1 className="text-[27px] leading-10 font-semibold text-[#2c3e50]">
                <Fit w={686}>What Is RAG? A New Frontier in AI Content Generation</Fit>
              </h1>
              <div className="mt-[18px] mb-6 flex h-5 items-center text-[12px] leading-5 text-[#7f8c8d]">
                <FaUser className="-mt-px h-3 w-[11px]" />
                <Fit w={55} className="ml-[3px]">JohnSmith</Fit>
                <FaCalendar className="-mt-px ml-[15px] h-3 w-[11px]" />
                <Fit w={92} className="ml-1">February 25, 2025</Fit>
              </div>

              <Para>
                <Fit w={1062}>Artificial Intelligence is evolving at a rapid pace, and one of the most exciting developments in recent years is RAG, or <b>Retrieval Augmented Generation</b>. This innovative approach is</Fit>
                <Fit w={788}>transforming how machines generate content and interact with data. Here’s a quick dive into what RAG is all about and why it matters.</Fit>
              </Para>

              <Heading w={131}>The Basics of RAG</Heading>
              <Para><Fit w={486}>At its core, RAG is a hybrid method that marries the strengths of two AI paradigms:</Fit></Para>
              <ol className="mb-[16.2px]">
                <Item marker="1."><Fit w={675}><b>Retrieval Systems:</b> These systems search through vast amounts of data or documents to find relevant information.</Fit></Item>
                <Item marker="2."><Fit w={971}><b>Generative Models:</b> These models, like the ones powering modern chatbots, can create text, answer questions, or summarize information based on learned patterns.</Fit></Item>
              </ol>
              <Para><Fit w={876}>By combining these two, RAG can produce responses that are not only coherent and contextually relevant but also grounded in real, up-to-date data.</Fit></Para>

              <Heading w={162}>How Does RAG Work?</Heading>
              <Para>
                <Fit w={1058}>Imagine you ask a question about a recent event. A typical language model might rely solely on the data it was trained on, which might be outdated. With RAG, the process involves</Fit>
                <Fit w={59}>two steps:</Fit>
              </Para>
              <ul className="mb-[16.2px]">
                <Item><Fit w={751}><b>Retrieval:</b> The system first sifts through a database or external source to pull in the latest and most relevant documents or facts.</Fit></Item>
                <Item><Fit w={701}><b>Generation:</b> Then, the generative model uses this retrieved information to craft a well-informed and accurate response.</Fit></Item>
              </ul>
              <Para><Fit w={889}>This two-step approach allows RAG to overcome one of the traditional challenges of AI—ensuring that responses are both current and factually correct.</Fit></Para>

              <Heading w={172}>Why Is RAG Important?</Heading>
              <Para><Fit w={358}>RAG represents a significant leap forward for several reasons:</Fit></Para>
              <ul className="mb-[16.2px]">
                <Item><Fit w={754}><b>Improved Accuracy:</b> By grounding responses in real data, RAG reduces the risk of generating outdated or incorrect information.</Fit></Item>
                <Item>
                  <Fit w={1031}><b>Enhanced Flexibility:</b> Whether it's for customer support, research assistance, or content creation, RAG's ability to pull in the most recent data makes it adaptable across various</Fit>
                  <Fit w={60}>industries.</Fit>
                </Item>
                <Item><Fit w={971}><b>Bridging the Gap:</b> RAG helps bridge the gap between static training data and dynamic real-world information, ensuring AI remains relevant in a fast-changing world.</Fit></Item>
              </ul>

              <Heading w={179}>Real-World Applications</Heading>
              <Para><Fit w={249}>The potential applications of RAG are vast:</Fit></Para>
              <ul className="mb-[16.2px]">
                <Item><Fit w={800}><b>Customer Support:</b> AI chatbots can provide up-to-date information by referencing the latest product manuals, FAQs, or policy changes.</Fit></Item>
                <Item><Fit w={777}><b>Research:</b> Academics and professionals can use RAG-powered tools to quickly access and summarize recent studies or news articles.</Fit></Item>
                <Item><Fit w={752}><b>Content Creation:</b> Writers and marketers can generate articles or reports that are both creative and informed by the latest data.</Fit></Item>
              </ul>

              <Heading w={111}>Looking Ahead</Heading>
              <Para>
                <Fit w={1053}>As AI continues to integrate into our daily lives, technologies like RAG will play a crucial role in ensuring that our interactions with machines are not only intelligent but also reliable.</Fit>
                <Fit w={789}>By blending the power of retrieval with advanced generation, RAG is paving the way for a more informed and responsive digital future.</Fit>
              </Para>
              <Para>
                <Fit w={1031}>Whether you're an AI enthusiast, a tech professional, or just curious about the latest in technology, RAG is definitely a topic worth keeping an eye on. The fusion of retrieval and</Fit>
                <Fit w={799}>generation is just one example of how innovative approaches can enhance our interaction with technology—and it's only the beginning.</Fit>
              </Para>
            </article>

            <h2 className="mt-[43px] text-[19px] leading-[30px] font-semibold text-[#2c3e50]"><Fit w={101}>Comments</Fit></h2>
            <div className="mt-[21px] h-[177px] shrink-0 rounded-[10px] bg-white px-4 pt-[17px] shadow-[0_3px_13px_rgba(0,0,0,0.06)]">
              <div className="flex h-[83px] items-start justify-between rounded-[6px] border border-[#e6e6e6] pt-3 pr-0.5 pl-[13px] text-[13px] leading-5 text-[#757575]">
                <Fit w={122}>Write your comment...</Fit>
                <svg viewBox="0 0 18 18" className="mt-[50px] h-[18px] w-[18px]" stroke="#5e5e5e" strokeWidth="2.300" strokeLinecap="round"><path d="M1.500 16.500 16.500 1.500M10.500 16.500l6-6" /></svg>
              </div>
              <div className="mt-[18px] flex items-center">
                <FaRegFaceSmile className="size-[15px] text-[#7f8c8d]" />
                <FaRegImage className="size-[15px] text-[#7f8c8d]" />
                <div className="ml-auto flex h-[30px] w-[116px] items-center justify-center rounded-[5px] bg-[#3498db] text-[13px] font-bold text-white">
                  <Fit w={82}>Post Comment</Fit>
                </div>
              </div>
            </div>
            <div className="mt-[25px] h-[131px] shrink-0 rounded-[10px] bg-white px-4 pt-[18px] shadow-[0_3px_13px_rgba(0,0,0,0.06)]">
              <div className="flex h-5 justify-between text-[13px] leading-5 font-semibold text-[#2c3e50]">
                <Fit w={79}>AliceJohnson</Fit>
                <Fit w={56} className="-mt-px text-[12px] font-normal text-[#95a5a6]">1 hour ago</Fit>
              </div>
              <div className="mt-[11px] flex h-6 items-center text-[13px] leading-6 text-[#34495e]">
                <Fit w={624}>Interesting I was always interested In RAG, and this was really helpful maybe I will create a full stack RAG assistant</Fit>
                <svg viewBox="0 0 14 14" className="mt-px h-[14px] w-[14px]">
                  <circle cx="7" cy="7" r="6.300" fill="#fdb52c" />
                  <path d="M3.300 8h7.400Q10 12 7 12T3.300 8z" fill="#b3226e" />
                  <path d="M3.500 6.800.600 3.600Q.200.800 2.200 1q1.200 0 1.500 1.200Q4.500 1 5.800 1.700 7 3 5.800 4.500zM10.500 6.800 8.200 4.500Q7 3 8.200 1.700 9.500 1 10.300 2.200 10.600 1 11.800 1q2-.200 1.600 2.600z" fill="#fb0d7e" />
                </svg>
              </div>
              <div className="mt-[9px] flex h-5 items-center text-[12px] leading-5 text-[#7f8c8d]">
                <FaRegThumbsUp className="size-3" />
                <Fit w={36} className="ml-2">0 Likes</Fit>
                <FaRegComment className="ml-[11px] size-[13px]" />
                <Fit w={29} className="ml-[7px]">Reply</Fit>
              </div>
            </div>
          </div>
        </div>
        <div className="flex w-[37px] flex-col items-center pt-[11px]">
          <svg viewBox="0 0 24 18" className="h-[18px] w-6 shrink-0"><path d="M10 1.500q2-2.500 4 0l9 13q1.500 3-2 3.500H3q-3.500-.500-2-3.500z" fill="#8b8b8b" /></svg>
          <div className="mt-4 h-[1698px] w-[23px] shrink-0 rounded-full bg-[#8b8b8b]" />
          <svg viewBox="0 0 24 18" className="mt-[74px] h-[18px] w-6 shrink-0"><path d="M10 16.500q2 2.500 4 0l9-13Q24.500.500 21 0H3Q-.500.500 1 3.500z" fill="#8b8b8b" /></svg>
        </div>
      </div>
      <div className="h-[9px] shrink-0" />

      {/* Taskbar */}
      <div className="flex h-[119px] shrink-0 items-start border-t-[3px] border-[#b0b9bc] bg-[linear-gradient(to_right,#dce6e4_0px,#dde5ea_300px,#d9e7ec_620px,#d4e9ef_860px,#d8eaf2_1400px,#d7eaf2_3500px,#dbe5f0_3839px)] text-[#1a1a1a]">
        <div className="relative mt-9 ml-12">
          <WeatherIcon />
          <div className="absolute -top-6 left-[27px] flex size-[41px] items-center justify-center rounded-full bg-[#c42b1c] text-[25px] leading-none text-white">6</div>
        </div>
        <div className="mt-[16px] ml-[19px] flex w-[713px] flex-col items-start text-[28px] leading-10">
          <Fit w={59}>15°C</Fit>
          <Fit w={95} className="text-[#5b5f61]">Cloudy</Fit>
        </div>
        <div className="mt-[29px] -ml-px"><StartIcon /></div>
        <div className="mt-[17px] ml-[35px] flex h-20 w-[549px] items-center rounded-full border-2 border-[#c9dbe3] border-b-[#afc1c8] bg-[#f2f8fc] pl-[27px]">
          <svg viewBox="0 0 37 38" className="h-[38px] w-[37px]" fill="none" stroke="#262626" strokeWidth="4" strokeLinecap="round"><circle cx="16" cy="15.500" r="13.500" /><path d="m25.500 26.500 9 9" /></svg>
          <Fit w={100} className="ml-[27px] text-[32px] leading-[44px] text-[#5d6264]">Search</Fit>
          <div className="mt-1 mr-2.5 ml-auto"><SearchArt /></div>
        </div>
        <div className="ml-[6px] flex">
          <TaskCell><TaskViewIcon /></TaskCell>
          <TaskCell><CopilotIcon id="cpb" className="mt-1 h-[52px] w-14" /></TaskCell>
          <TaskCell active><EdgeIcon /></TaskCell>
          <TaskCell running><ExplorerIcon /></TaskCell>
          <TaskCell><StoreIcon /></TaskCell>
          <TaskCell><OutlookIcon /></TaskCell>
          <TaskCell running>
            <div className="relative">
              <ChromeIcon />
              <div className="absolute -top-3 left-[33px] flex size-10 items-center justify-center rounded-full bg-[#512da8] text-[22px] leading-none text-[#d9cdf2]">T</div>
            </div>
          </TaskCell>
          <TaskCell><SapphireIcon /></TaskCell>
          <TaskCell><FirefoxIcon /></TaskCell>
          <TaskCell running><WebexIcon /></TaskCell>
          <TaskCell running><IntelliJIcon /></TaskCell>
          <TaskCell running><WordIcon /></TaskCell>
          <TaskCell running><CodeIcon /></TaskCell>
          <TaskCell running><PowerPointIcon /></TaskCell>
        </div>
        <svg viewBox="0 0 28 16" className="mt-[49px] ml-[227px] h-4 w-7" fill="none" stroke="#1a1a1a" strokeWidth="3" strokeLinecap="round" strokeLinejoin="round"><path d="M1.500 14.500 14 2l12.500 12.500" /></svg>
        <svg viewBox="0 0 42 36" className="mt-[42px] ml-[46px] h-9 w-[42px]">
          <path d="M10 28C4 28 1.500 24 1.500 20S5 12 9 12C10 5 15 2 20 2s10 4 11 9c5 0 7 4 7 8z" fill="#979797" />
          <path d="M3 25 18 16l6 12H10q-4 0-7-3z" fill="#dcdcdc" />
          <path d="M17 28h-7C4 28 1.500 24 1.500 20S5 12 9 12C10 5 15 2 20 2s10 4 11 9" fill="none" stroke="#111" strokeWidth="2.600" />
          <circle cx="29" cy="24" r="11.500" fill="#0a66b8" />
          <circle cx="29" cy="18" r="1.900" fill="#fff" />
          <path d="M29 22v8.500" stroke="#fff" strokeWidth="3.200" />
        </svg>
        <svg viewBox="0 0 40 29" className="mt-[42px] ml-[38px] h-[29px] w-10" fill="none" stroke="#1a1a1a" strokeWidth="2.800" strokeLinecap="round">
          <path d="M1.500 12.500a22 22 0 0 1 37 0M7 17.500a15.500 15.500 0 0 1 26 0M12.500 22a9.500 9.500 0 0 1 15 0" />
          <circle cx="20" cy="25.500" r="3.200" fill="#1a1a1a" stroke="none" />
        </svg>
        <svg viewBox="0 0 42 34" className="mt-[41px] ml-5 h-[34px] w-[42px]" fill="none" stroke="#1a1a1a" strokeWidth="2.600" strokeLinecap="round" strokeLinejoin="round">
          <path d="M2 11.500h6L15.500 3v28L8 23.500H2q-1 0-1-1v-10q0-1 1-1z" />
          <path d="M21 11.500q3 5.500 0 11M26 6.500q7 10.500 0 21" />
          <path d="M32 2q10 15 0 30" stroke="#b2bfc5" />
        </svg>
        <svg viewBox="0 0 42 34" className="mt-[37px] ml-[17px] h-[34px] w-[42px]">
          <path d="M14 9h17q5 0 5 5v13q0 5-5 5H7q-5 0-5-5v-7" fill="none" stroke="#1a1a1a" strokeWidth="2.600" />
          <path d="M13 13h17q2.500 0 2.500 2v11q0 2-2.500 2H8q-3 0-3-2v-5h4z" fill="#1a1a1a" />
          <path d="M37 17h2q2 0 2 2v3q0 2-2 2h-2z" fill="#1a1a1a" />
          <path d="m8 0-6 11.500h5L4.500 20 13 8.500H8.500z" fill="#1a1a1a" />
        </svg>
        <div className="mt-[16px] ml-[40px] flex w-[121px] flex-col items-end text-[28px] leading-10">
          <Fit w={107}>6:52 PM</Fit>
          <Fit w={121}>3/6/2025</Fit>
        </div>
        <svg viewBox="0 0 34 39" className="mt-[38px] ml-[22px] h-[39px] w-[34px]">
          <path d="M3 13C3 5 9 1 15 1s13 4 13 12v9l4 6v2H0v-2l3-6z" fill="#1a1a1a" />
          <path d="M10 33h11q-2 5-5.500 5T10 33z" fill="#1a1a1a" />
          <path d="M11.500 11.500h9l-8.500 11h9" fill="none" stroke="#fff" strokeWidth="2.400" />
          <path d="M22 0h12v14H22z" fill="#d9e6f0" />
          <path d="M23.500 2h8l-8 10h8.500" fill="none" stroke="#1a1a1a" strokeWidth="2.400" />
        </svg>
      </div>
    </div>
  );
}
